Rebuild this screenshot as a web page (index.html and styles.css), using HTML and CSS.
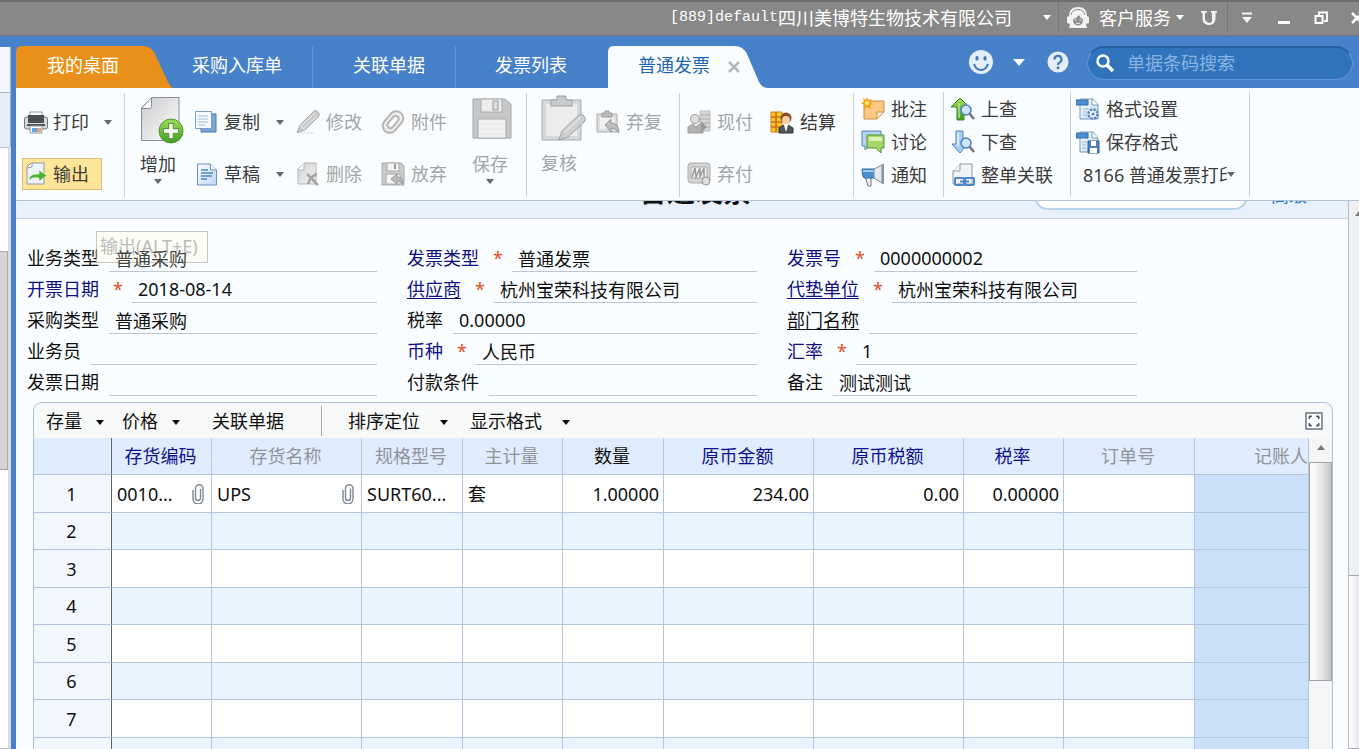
FILE: index.html
```html
<!DOCTYPE html>
<html lang="zh-CN">
<head>
<meta charset="utf-8">
<title>普通发票</title>
<link rel="stylesheet" href="styles.css">
</head>
<body>
<svg class="defs" aria-hidden="true">
  <defs>
    <linearGradient id="gPaper" x1="0" y1="0" x2="1" y2="1"><stop offset="0" stop-color="#c9cacc"/><stop offset="1" stop-color="#fff"/></linearGradient>
    <linearGradient id="gBlue" x1="0" y1="0" x2="1" y2="1"><stop offset="0" stop-color="#fff"/><stop offset="1" stop-color="#b9d7f3"/></linearGradient>
    <linearGradient id="gGreen" x1="0" y1="0" x2="0" y2="1"><stop offset="0" stop-color="#a3dc5c"/><stop offset="1" stop-color="#3f9d20"/></linearGradient>
    <linearGradient id="gGray" x1="0" y1="0" x2="1" y2="1"><stop offset="0" stop-color="#d2d2d2"/><stop offset="1" stop-color="#f2f2f2"/></linearGradient>
    <symbol id="clip" viewBox="0 0 12 20"><path d="M8.500 5v9a2.500 2.500 0 0 1-5 0V4.500a3.500 3.500 0 0 1 7.500 0V15a5 5 0 0 1-10 0V6" fill="none" stroke="#7e8691" stroke-width="1.400"/></symbol>
  </defs>
</svg>

<header class="titlebar">
  <button class="tb-item tb-company"><span class="tb-code">[889]default</span>四川美博特生物技术有限公司</button>
  <button class="tb-item tb-drop" aria-label="切换公司"><i class="caret"></i></button>
  <button class="tb-item tb-service">
    <svg width="24" height="24" viewBox="0 0 24 24"><path d="M3 10Q3 1 12 1t9 9l2 1v6l-3 1 1 4H3l1-4-3-1v-6z" fill="#f2f2f2"/><path d="M5 9Q6 3.500 12 3.500T19 9" fill="none" stroke="#8f8f8f"/><path d="M7 13q4-1 6-4 1 3 4 4 0 6-5 6.500Q7 19 7 13z" fill="#8a8a8a"/><path d="M8.500 14h2M13.500 14h2M10 17q2 1 4 0" stroke="#f4f4f4" fill="none"/></svg>
    客户服务<i class="caret"></i></button>
  <button class="tb-item tb-u" aria-label="U"><svg width="18" height="18" viewBox="0 0 18 18"><path d="M1 2h6v1.500L5 4v6a4 4 0 0 0 7 2.500V4l-1-.5V2h6v1.500l-1.500.5v5.500c0 4-3 6.500-6.500 6.500s-6.500-2.500-6.500-6V4L1 3.500z" fill="#f2f2f2"/></svg></button>
  <button class="tb-item tb-win" aria-label="更多"><svg width="12" height="12"><path d="M1 1.500h10" stroke="#f4f4f4" stroke-width="2"/><path d="M1 5h10l-5 6z" fill="#f4f4f4"/></svg></button>
  <button class="tb-item tb-win" aria-label="最小化"><svg width="14" height="14"><path d="M1 11.500h12" stroke="#fff" stroke-width="3"/></svg></button>
  <button class="tb-item tb-win" aria-label="还原"><svg width="14" height="14"><path d="M5 4V1.500h8V10h-3M1.500 5h7v7h-7z" fill="none" stroke="#fff" stroke-width="2"/></svg></button>
  <button class="tb-item tb-close" aria-label="关闭"><svg width="12" height="12"><path d="M1 1l10 10M11 1L1 11" stroke="#fff" stroke-width="2.500"/></svg></button>
</header>

<div class="shell">
  <aside class="rail"><div class="rail-head"></div><div class="rail-gap"></div><div class="rail-list"><div class="rail-thumb"></div></div></aside>
  <main class="work">
    <nav class="tabs">
      <a href="#" class="tab tab-home"><svg class="tab-shape" viewBox="0 0 158 42" preserveAspectRatio="none"><path d="M0 42V6Q0 0 6 0H127Q135 0 139 8L152 36Q155 42 158 42z" fill="#e9901a"/></svg>我的桌面</a>
      <a href="#" class="tab tab-in">采购入库单</a>
      <a href="#" class="tab tab-rel">关联单据</a>
      <a href="#" class="tab tab-list">发票列表</a>
      <a href="#" class="tab tab-active"><svg class="tab-shape" viewBox="0 0 160 42" preserveAspectRatio="none"><path d="M0 42V6Q0 0 6 0H127Q135 0 139 8L151 36Q154 42 160 42z" fill="#fafdff"/></svg>普通发票<svg class="tab-x" width="12" height="12"><path d="M1 1l10 10M11 1L1 11" stroke="#b5b5b5" stroke-width="2.500"/></svg></a>
      <div class="tab-tools">
        <button class="plain" aria-label="表情"><svg width="26" height="26" viewBox="0 0 26 26"><circle cx="13" cy="12" r="12" fill="#e4eefa"/><path d="M9 7.500v1.500M17 7.500v1.500" stroke="#3f74b3" stroke-width="3" stroke-linecap="round"/><path d="M6 14q2 6 7 6t7-6" fill="none" stroke="#3f74b3" stroke-width="2"/></svg></button>
        <button class="plain tool-drop" aria-label="更多"><i class="caret caret-lg"></i></button>
        <button class="plain tool-help" aria-label="帮助"><svg width="22" height="24" viewBox="0 0 22 24"><circle cx="11" cy="11" r="10.500" fill="#e4eefa"/><path d="M7.500 8.500a3.500 3.500 0 1 1 5 3c-1.200.6-1.500 1.200-1.500 2.500" fill="none" stroke="#4a7ab3" stroke-width="2.300"/><circle cx="11" cy="16.800" r="1.500" fill="#4a7ab3"/></svg></button>
        <label class="search"><svg width="20" height="20" viewBox="0 0 20 20"><circle cx="8" cy="8" r="5.500" fill="none" stroke="#fff" stroke-width="2.500"/><path d="M12 12l6 6" stroke="#fff" stroke-width="3.500"/></svg><input type="search" placeholder="单据条码搜索" aria-label="单据条码搜索"></label>
      </div>
    </nav>

    <div class="ribbon">
      <section class="group g-out rows2">
        <button class="cmd"><svg class="ic" viewBox="0 0 24 24"><path d="M6 2h12v6H6z" fill="#fff" stroke="#9a9a9a"/><rect x=".5" y="7" width="23" height="12" rx="2" fill="#d6dadf" stroke="#777"/><rect x="4" y="5" width="16" height="8" fill="#4a4d52"/><path d="M3 15h18" stroke="#555" stroke-width="2"/><path d="M6 16h12v7H6z" fill="#fff" stroke="#899"/><path d="M8 18h5v4H8z" fill="#5aa7e2"/><path d="M13 18h4v4h-4z" fill="#e0a274"/></svg>打印<i class="caret"></i></button>
        <button class="cmd cmd-hot"><svg class="ic" viewBox="0 0 24 24"><path d="M7 1h13v21H3V5z" fill="#eef3fa" stroke="#8a97aa"/><path d="M3 6l5-1V1" fill="#fff" stroke="#8a97aa"/><path d="M5 19c0-7 5-7 10-7V8l8 5.500-8 6V16c-5-1-8 0-10 3z" fill="#4cb530" stroke="#fff" stroke-width=".6"/></svg>输出</button>
      </section>

      <section class="group g-edit">
        <button class="big big-add"><svg width="44" height="48" viewBox="0 0 44 48"><path d="M12 1.500h27v43H1.500V12z" fill="url(#gPaper)" stroke="#8b8e94"/><path d="M1.500 12.500h8q2 0 2-2V1.500z" fill="#fff" stroke="#8b8e94"/><circle cx="31" cy="35" r="12" fill="url(#gGreen)" stroke="#4c9a2c"/><path d="M31 27v16M23 35h16" stroke="#5c9c3c" stroke-width="6"/><path d="M31 28v14M24 35h14" stroke="#fff" stroke-width="3.500"/></svg>增加<i class="caret"></i></button>
        <div class="rows2 c-copy">
          <button class="cmd"><svg class="ic" viewBox="0 0 24 24"><path d="M7 4h15v18H7z" fill="#78a7d8" stroke="#4678ad"/><path d="M1.500 1.500h16v17h-16z" fill="#f4f9ff" stroke="#7d9cc0"/><path d="M4 6h10M4 9h10M4 12h10M4 15h7" stroke="#a2bddb"/></svg>复制<i class="caret"></i></button>
          <button class="cmd"><svg class="ic" viewBox="0 0 24 24"><path d="M3.500 2h13l6 6v15h-19z" fill="url(#gBlue)" stroke="#6b8fbb"/><path d="M16.500 2v6h6" fill="#fff" stroke="#6b8fbb"/><path d="M7 8h7M7 11h12M7 14h11M7 17h6" stroke="#4e85c2" stroke-width="1.500"/></svg>草稿<i class="caret"></i></button>
        </div>
        <div class="rows2 c-mod">
          <button class="cmd off" disabled><svg class="ic" viewBox="0 0 24 24"><path d="M1 23l3-8L18 1q2-1 4 1t1 4L9 20z" fill="#ccc" stroke="#a9a9a9"/><path d="M5 16L19 3M7 19L21 6M4 15l5 5" stroke="#e9e9e9" fill="none"/><path d="M5 23h13" stroke="#ddd"/></svg>修改</button>
          <button class="cmd off" disabled><svg class="ic" viewBox="0 0 24 24"><path d="M8 1h12v21H2V7z" fill="url(#gGray)" stroke="#b5b5b5"/><path d="M2 8h6V1" fill="#fff" stroke="#b5b5b5"/><path d="M11 12l11 11M21 12c-5 2-8 6-9 10" stroke="#a5a5a5" stroke-width="2.500" fill="none"/></svg>删除</button>
        </div>
        <div class="rows2 c-att">
          <button class="cmd off" disabled><svg class="ic" viewBox="0 0 24 24"><g transform="rotate(40 12 12)"><rect x="5" y="0" width="14" height="24" rx="7" fill="#eee" stroke="#b5b5b5" stroke-width="2"/><path d="M9 16V8a3 3 0 0 1 6 0v8a3 3 0 0 1-6 0" fill="#fff" stroke="#b5b5b5" stroke-width="2"/></g></svg>附件</button>
          <button class="cmd off" disabled><svg class="ic" viewBox="0 0 24 24"><path d="M1 1h19l3 3v19H1z" fill="#c9c9c9" stroke="#aaa"/><path d="M6 1h12v8H6zM5 12h14v10H5z" fill="#f3f3f3" stroke="#aaa"/><path d="M14 2v5" stroke="#999" stroke-width="2"/><path d="M10 17l6-5v3q6 0 6 7-2-3-6-3v3z" fill="#bbb" stroke="#999"/></svg>放弃</button>
        </div>
        <button class="big big-save off" disabled><svg width="40" height="42" viewBox="0 0 40 42"><path d="M1 1h32l6 5v34H1z" fill="#c6c7c9" stroke="#a6a7a9"/><path d="M9 1h21v13H9z" fill="#ececec" stroke="#aaa"/><path d="M21 3h5v9h-5z" fill="#ddd" stroke="#999"/><path d="M6 21h28v19H6z" fill="#f1f1f1" stroke="#aaa"/><path d="M9 26h22M9 31h22M9 36h22" stroke="#e6e6e6"/></svg>保存<i class="caret"></i></button>
      </section>

      <section class="group g-audit">
        <button class="big big-audit off" disabled><svg width="46" height="48" viewBox="0 0 46 48"><path d="M1 5h39v40H1z" fill="#d6d7d8" stroke="#a8a9aa"/><path d="M5 9h31v32H5z" fill="#ececec"/><path d="M10 11V5h6V1h9v4h6v6z" fill="#c9cacb" stroke="#9c9d9e"/><path d="M18 45l3-9 17-16q3-1 5 1t1 5L27 42z" fill="#d0d0d0" stroke="#a0a0a0"/><path d="M24 37l16-15" stroke="#f4f4f4"/></svg>复核</button>
        <div class="rows2"><button class="cmd off" disabled><svg class="ic" viewBox="0 0 24 24"><path d="M1 4h20v18H1z" fill="#dedede" stroke="#aaa"/><path d="M4 7h14v12H4z" fill="#f1f1f1"/><path d="M6 7V3h3V1h4v2h3v4z" fill="#bbb" stroke="#999"/><path d="M9 15l6-6v4q8 0 8 10-3-5-8-5v4z" fill="#bdbdbd" stroke="#999"/></svg>弃复</button></div>
      </section>

      <section class="group g-pay">
        <div class="rows2 c-pay">
          <button class="cmd off" disabled><svg class="ic" viewBox="0 0 24 24"><path d="M13 1h10v20H13z" fill="#d5d5d5" stroke="#bbb"/><path d="M13 5h10M13 9h10M13 13h10M13 17h10" stroke="#aaa"/><circle cx="8" cy="9" r="4.500" fill="#ddd" stroke="#999"/><path d="M1 23v-6l5-3 3 3 3-3 4 3v6z" fill="#b2b2b2" stroke="#999"/><path d="M14 11l6 6-6 5z" fill="#999"/></svg>现付</button>
          <button class="cmd off" disabled><svg class="ic" viewBox="0 0 24 24"><rect x="1" y="1" width="22" height="20" rx="3" fill="#d4d4d4" stroke="#a9a9a9"/><path d="M4 5h16v11H4z" fill="#eee" stroke="#aaa"/><path d="M5 15l3-9 1 9 4-9v9l4-9v9" fill="none" stroke="#999" stroke-width="1.500"/><circle cx="19" cy="19" r="4" fill="#ddd" stroke="#999"/></svg>弃付</button>
        </div>
        <div class="rows2"><button class="cmd"><svg class="ic" viewBox="0 0 24 24"><path d="M1 2h11v20H1z" fill="#f9cc2c" stroke="#d2771b"/><path d="M1 7h11M1 12h11M1 17h11M6 2v20" stroke="#cf6a18" stroke-width="1.600"/><circle cx="16" cy="8" r="5.500" fill="#8c4c24"/><circle cx="16" cy="10" r="4" fill="#f6cfa3"/><path d="M9 23v-5l5-3 2 2 2-2 5 3v5z" fill="#4e565f" stroke="#333"/><path d="M14 15h4l-2 7z" fill="#fff"/></svg>结算</button></div>
      </section>

      <section class="group g-note rows3">
        <button class="cmd"><svg class="ic" viewBox="0 0 24 24"><path d="M3 4h20v11l-7 7H3z" fill="#fbc982" stroke="#c98d3c"/><path d="M23 15h-7v7z" fill="#fff2dc" stroke="#c98d3c"/><path d="M6 0l1.500 3L11 2 9 5l3 2-3 1 1 4-4-2-3 2V8L0 6l3-1-1-4 3 2z" fill="#f7a114"/><circle cx="6" cy="6" r="2.300" fill="#ffe774"/></svg>批注</button>
        <button class="cmd"><svg class="ic" viewBox="0 0 24 24"><path d="M1 1h19v15H7l-3 4v-4H1z" fill="#b7d3f1" stroke="#5280b5"/><path d="M6 5h17v13h-3v5l-5-5H6z" fill="#a4d768" stroke="#4f9231"/><path d="M8 7h13v4H8z" fill="#d9f1b7"/></svg>讨论</button>
        <button class="cmd"><svg class="ic" viewBox="0 0 24 24"><path d="M4 13h6v10H7z" fill="#eee" stroke="#777"/><path d="M1 6h14v9H3q-2-2-2-9z" fill="#4a8fd2" stroke="#326ca8"/><path d="M2 8h13" stroke="#a4cdf0" stroke-width="2"/><path d="M13 6l8-4v18l-8-5z" fill="#e5e8ec" stroke="#7d8894"/><path d="M22 1v20" stroke="#8b95a0" stroke-width="2"/></svg>通知</button>
      </section>

      <section class="group g-find rows3">
        <button class="cmd"><svg class="ic" viewBox="0 0 24 24"><path d="M9 1l9 9h-5v13H6V10H0z" fill="url(#gGreen)" stroke="#3b8c20"/><path d="M8 6v15" stroke="#d5f5b4"/><path d="M18 16l5 6" stroke="#6d747c" stroke-width="2.500"/><circle cx="15" cy="13" r="5" fill="#cfe5fb" stroke="#4a80b8" stroke-width="1.500"/></svg>上查</button>
        <button class="cmd"><svg class="ic" viewBox="0 0 24 24"><path d="M5 1h7v13h5l-8 9-8-9h4z" fill="#a9cff4" stroke="#4a80b8"/><path d="M7 2v14" stroke="#e9f4ff" stroke-width="1.500"/><path d="M18 16l5 6" stroke="#6d747c" stroke-width="2.500"/><circle cx="15" cy="13" r="5" fill="#cfe5fb" stroke="#4a80b8" stroke-width="1.500"/></svg>下查</button>
        <button class="cmd"><svg class="ic" viewBox="0 0 24 24"><path d="M9 1h12v20H2V8z" fill="#f1f3f6" stroke="#8c97a6"/><path d="M2 8h7V1" fill="#fff" stroke="#8c97a6"/><g fill="none" stroke="#4d87c5" stroke-width="2"><rect x="4" y="15" width="9" height="7" rx="1"/><rect x="14" y="15" width="9" height="7" rx="1"/><path d="M9 18.500h9"/></g></svg>整单关联</button>
      </section>

      <section class="group g-form rows3">
        <button class="cmd"><svg class="ic" viewBox="0 0 24 24"><path d="M4 2h13l5 6v14H4z" fill="url(#gBlue)" stroke="#7d96b5"/><path d="M16 2v6h6" fill="#fff" stroke="#7d96b5"/><path d="M0 3h12v5H0z" fill="#4a8fd2" stroke="#34699f"/><path d="M7 12h6M7 15h4M7 18h4" stroke="#9bb7d6"/><circle cx="17" cy="17" r="4.500" fill="#fff" stroke="#5589c3" stroke-width="2.500" stroke-dasharray="2.500 1"/><circle cx="17" cy="17" r="1.500" fill="#4a7db5"/></svg>格式设置</button>
        <button class="cmd"><svg class="ic" viewBox="0 0 24 24"><path d="M4 2h13l5 6v14H4z" fill="url(#gBlue)" stroke="#7d96b5"/><path d="M16 2v6h6" fill="#fff" stroke="#7d96b5"/><path d="M0 3h12v5H0z" fill="#4a8fd2" stroke="#34699f"/><path d="M6 12h5M6 15h4M6 18h4" stroke="#9bb7d6"/><path d="M12 11h11v12H12z" fill="#4f83ba" stroke="#2f5f94"/><path d="M15 11h5v5h-5zM14 18h7v5h-7z" fill="#fff"/></svg>保存格式</button>
        <div class="tpl"><select aria-label="打印模板"><option>8166 普通发票打印模版</option></select><i class="caret"></i></div>
      </section>
    </div>

    <div class="doc">
      <div class="page">
        <div class="strip"><h1 class="doc-title">普通发票</h1><input class="strip-search" aria-label="查找"><a href="#" class="strip-link">高级</a></div>
        <form class="fields">
          <div class="tip" role="tooltip">输出(ALT+E)</div>
          <div class="field"><label for="f1">业务类型</label><input id="f1" value="普通采购"></div>
          <div class="field"><label for="f2" class="req">发票类型</label><b>*</b><input id="f2" value="普通发票"></div>
          <div class="field"><label for="f3" class="req">发票号</label><b>*</b><input id="f3" value="0000000002"></div>
          <div class="field"><label for="f4" class="req">开票日期</label><b>*</b><input id="f4" value="2018-08-14"></div>
          <div class="field"><label for="f5" class="req lk">供应商</label><b>*</b><input id="f5" value="杭州宝荣科技有限公司"></div>
          <div class="field"><label for="f6" class="req lk">代垫单位</label><b>*</b><input id="f6" value="杭州宝荣科技有限公司"></div>
          <div class="field"><label for="f7">采购类型</label><input id="f7" value="普通采购"></div>
          <div class="field"><label for="f8">税率</label><input id="f8" value="0.00000"></div>
          <div class="field"><label for="f9" class="lk">部门名称</label><input id="f9"></div>
          <div class="field"><label for="f10">业务员</label><input id="f10"></div>
          <div class="field"><label for="f11" class="req">币种</label><b>*</b><input id="f11" value="人民币"></div>
          <div class="field"><label for="f12" class="req">汇率</label><b>*</b><input id="f12" value="1"></div>
          <div class="field"><label for="f13">发票日期</label><input id="f13"></div>
          <div class="field"><label for="f14">付款条件</label><input id="f14"></div>
          <div class="field"><label for="f15">备注</label><input id="f15" value="测试测试"></div>
        </form>

        <section class="panel">
          <div class="bar">
            <button>存量<i class="caret"></i></button>
            <button>价格<i class="caret"></i></button>
            <button class="bar-rel">关联单据</button>
            <span class="bar-sep"></span>
            <button class="bar-wide">排序定位<i class="caret"></i></button>
            <button class="bar-wide">显示格式<i class="caret"></i></button>
            <button class="bar-full" aria-label="全屏"><svg width="18" height="18" viewBox="0 0 18 18"><path d="M1 1h16v16H1z" fill="#fff" stroke="#6b7280" stroke-width="1.500"/><path d="M4 7V4h3zM11 4h3v3zM14 11v3h-3zM7 14H4v-3z" fill="#5b6270" stroke="#5b6270"/></svg></button>
          </div>
          <div class="gridwrap">
            <table class="grid">
              <colgroup><col class="w78"><col class="w100"><col class="w150"><col class="w101"><col class="w100"><col class="w101"><col class="w150"><col class="w150"><col class="w100"><col class="w131"><col></colgroup>
              <thead><tr><th></th><th class="must">存货编码</th><th>存货名称</th><th>规格型号</th><th>主计量</th><th class="on">数量</th><th class="must">原币金额</th><th class="must">原币税额</th><th class="must">税率</th><th>订单号</th><th class="last">记账人</th></tr></thead>
              <tbody>
                <tr><th>1</th><td><div class="att">0010...<svg width="12" height="20"><use href="#clip"/></svg></div></td><td><div class="att">UPS<svg width="12" height="20"><use href="#clip"/></svg></div></td><td>SURT60...</td><td>套</td><td class="num">1.00000</td><td class="num">234.00</td><td class="num">0.00</td><td class="num">0.00000</td><td></td><td></td></tr>
                <tr><th>2</th><td></td><td></td><td></td><td></td><td></td><td></td><td></td><td></td><td></td><td></td></tr>
                <tr><th>3</th><td></td><td></td><td></td><td></td><td></td><td></td><td></td><td></td><td></td><td></td></tr>
                <tr><th>4</th><td></td><td></td><td></td><td></td><td></td><td></td><td></td><td></td><td></td><td></td></tr>
                <tr><th>5</th><td></td><td></td><td></td><td></td><td></td><td></td><td></td><td></td><td></td><td></td></tr>
                <tr><th>6</th><td></td><td></td><td></td><td></td><td></td><td></td><td></td><td></td><td></td><td></td></tr>
                <tr><th>7</th><td></td><td></td><td></td><td></td><td></td><td></td><td></td><td></td><td></td><td></td></tr>
                <tr><th></th><td></td><td></td><td></td><td></td><td></td><td></td><td></td><td></td><td></td><td></td></tr>
              </tbody>
            </table>
            <div class="vbar"><div class="vbar-up"><i class="caret caret-up"></i></div><div class="vbar-thumb"></div></div>
          </div>
        </section>
      </div>
      <div class="pagebar"><div class="pagebar-up"><i class="caret caret-up"></i></div><div class="pagebar-thumb"></div></div>
    </div>
  </main>
</div>
</body>
</html>
```
FILE: styles.css
```css
* { box-sizing: border-box; }
html, body { height: 100%; margin: 0; }
body {
  display: flex;
  flex-direction: column;
  overflow: hidden;
  font-family: "Noto Sans", "Noto Sans CJK SC", sans-serif;
  font-size: 18px;
  line-height: 24px;
  color: #111;
  background: #fafdff;
}
button, input, select { font: inherit; color: inherit; margin: 0; }
button { padding: 0; border: 0; background: none; white-space: nowrap; }
a { color: inherit; text-decoration: none; }
svg { flex: none; display: block; }
.defs { position: absolute; width: 0; height: 0; }

.caret { display: block; flex: none; border: 4px solid transparent; border-top: 5px solid currentColor; border-bottom: 0; }
.caret-lg { border-width: 6px; border-top-width: 7px; border-bottom-width: 0; }
.caret-up { border-top: 0; border-bottom: 5px solid #777; }

/* Title bar */
.titlebar {
  flex: none;
  display: flex;
  justify-content: flex-end;
  height: 36px;
  overflow: hidden;
  padding-bottom: 2px;
  color: #fff;
  background: #888;
  border-top: 2px solid #6d6d6d;
  border-bottom: 1px solid #6f7680;
}
.tb-item { display: flex; align-items: center; justify-content: center; flex: none; }
.tb-company { padding-right: 17px; }
.tb-code { font-family: "Liberation Mono", monospace; font-size: 15px; }
.tb-drop { width: 30px; padding-left: 6px; border-right: 1px solid #757575; }
.tb-service { width: 132px; gap: 5px; }
.tb-service svg { margin-right: 4px; }
.tb-u { width: 37px; border-right: 1px solid #757575; }
.tb-win { width: 37px; }
.tb-close { width: 20px; padding-left: 12px; justify-content: flex-start; }

.shell { flex: 1; display: flex; min-height: 0; background: #4781c9; }

/* Left navigation edge */
.rail { flex: none; width: 16px; padding: 11px 5px 0 0; display: flex; flex-direction: column; }
.rail-head { height: 46px; background: #f1f7fc; border-right: 1px solid #9bb5d4; border-bottom: 1px solid #a9bdd6; }
.rail-gap { height: 54px; background: #e4eef9; border-right: 1px solid #9bb5d4; }
.rail-list { flex: 1; background: #fdfdfb; border: 1px solid #b9c2cd; border-left: 0; border-right: 3px solid #dcdcdc; padding-top: 103px; }
.rail-thumb { height: 219px; background: #d3d3d8; border: 1px solid #aaa; border-left: 0; }

.work { flex: 1; min-width: 0; display: flex; flex-direction: column; }

/* Tabs */
.tabs { flex: none; display: flex; height: 52px; padding-top: 10px; color: #fff; }
.tab { position: relative; z-index: 0; flex: none; display: flex; padding-top: 7px; white-space: nowrap; }
.tab-shape { position: absolute; inset: 0; width: 100%; height: 100%; z-index: -1; }
.tab-home { width: 158px; padding-left: 31px; }
.tab-in { width: 139px; padding-left: 18px; border-right: 1px solid #6296d4; }
.tab-rel { width: 143px; padding-left: 40px; border-right: 1px solid #6296d4; }
.tab-list { width: 152px; padding-left: 39px; }
.tab-active { width: 160px; padding-left: 30px; color: #1f66b3; }
.tab-x { margin: 8px 0 0 18px; }
.tab-tools { margin-left: auto; display: flex; align-items: center; height: 33px; padding-right: 6px; }
.tool-drop { margin: 0 22px 0 19px; }
.search {
  display: flex; align-items: center; gap: 12px;
  width: 266px; height: 34px; margin-left: 18px; padding: 0 7px;
  border-radius: 17px; background: #3075bc;
  border: 1px solid #5d97d8; border-top: 2px solid #2660a0;
}
.search input { flex: 1; min-width: 0; padding: 0; border: 0; outline: 0; background: none; }
.search input::placeholder { color: #87b3e2; opacity: 1; }

/* Ribbon */
.ribbon { flex: none; display: flex; height: 113px; padding: 0 0 3px; color: #3c3c3c; background: #fafdff; border-bottom: 1px solid #b3c2d0; }
.group { flex: none; display: flex; margin-top: 5px; border-right: 1px solid #ccd1d6; }
.rows2 { display: flex; flex-direction: column; align-items: flex-start; gap: 20px; padding-top: 13px; }
.rows3 { flex-direction: column; align-items: flex-start; margin-top: 4px; }
.cmd { display: flex; align-items: center; gap: 6px; height: 32px; }
.rows3 .cmd { height: 33px; }
.ic { width: 24px; height: 24px; }
.ribbon .caret { color: #666; }
.cmd .caret { margin-left: 10px; }
.off { color: #a2a5a8; }
.big { display: flex; flex-direction: column; align-items: flex-start; align-self: flex-start; }
.big svg { margin-bottom: 8px; }
.big .caret { margin: 3px 0 0 14px; }
.g-out { width: 109px; padding-left: 6px; }
.g-out .cmd { gap: 5px; border: 1px solid transparent; padding: 0 1px; width: 98px; }
.g-out .cmd-hot { width: 80px; background: #ffe597; border-color: #d9bb72; }
.g-edit { width: 402px; padding-left: 15px; }
.big-add { width: 44px; padding-top: 3px; }
.c-copy { margin-left: 10px; width: 102px; }
.c-mod { width: 85px; }
.c-att { width: 91px; }
.big-save { padding-top: 5px; width: 50px; }
.big-save svg { margin-bottom: 12px; }
.g-audit { width: 153px; padding-left: 14px; }
.big-audit { width: 55px; padding-top: 2px; }
.g-pay { width: 174px; padding-left: 7px; }
.c-pay { width: 83px; }
.g-note { width: 90px; padding-left: 7px; }
.g-find { width: 127px; padding-left: 7px; }
.g-form { width: 179px; padding-left: 5px; }
.tpl { display: flex; align-items: center; height: 33px; padding-left: 7px; }
.tpl select { width: 144px; height: 28px; padding: 0; border: 0; background: none; appearance: none; overflow: hidden; text-overflow: clip; }

/* Document */
.doc { flex: 1; min-height: 0; display: flex; background: #fafdff; }
.page { flex: 1; min-width: 0; display: flex; flex-direction: column; }
.strip {
  flex: none; position: relative; height: 18px; overflow: hidden;
  display: flex; align-items: flex-end; justify-content: center;
  background: #e8f0fc; border-bottom: 1px solid #c9d1de;
}
.doc-title { margin: 0 0 8px 26px; font-size: 28px; line-height: 38px; font-weight: 700; }
.strip-search { position: absolute; right: 100px; bottom: 8px; width: 214px; height: 28px; border: 2px solid #b9d3e8; border-radius: 14px; background: #fff; }
.strip-link { position: absolute; right: 41px; bottom: 11px; color: #2474bd; }
.fields {
  flex: none; position: relative;
  display: grid; grid-template-columns: repeat(3, minmax(0, 1fr)); grid-auto-rows: 31px; column-gap: 30px;
  padding: 22px 211px 6px 11px;
}
.field { display: flex; align-items: center; min-width: 0; }
.field label { flex: none; padding-top: 2px; }
.field b { width: 9px; padding-top: 2px; margin: 0 0 0 14px; color: #e2501e; font-weight: 400; text-align: center; }
.field input { flex: 1; min-width: 0; height: 31px; margin-left: 10px; padding: 4px 0 0 6px; border: 0; border-bottom: 1px solid #bfc6d0; background: none; border-radius: 0; outline: 0; }
.req { color: #10107f; }
.lk { text-decoration: underline; text-underline-offset: 2px; }
.tip { position: absolute; left: 80px; top: 12px; z-index: 2; width: 112px; height: 32px; padding: 0 3px; white-space: nowrap; border: 1px solid #a5a39c; background: #fffdf0; color: #909090; opacity: .6; line-height: 28px; }
.field:nth-child(2) input { position: relative; z-index: 3; color: #444; }

/* Detail grid */
.panel { flex: 1; min-height: 0; margin: 0 15px 0 17px; display: flex; flex-direction: column; overflow: hidden; border: 1px solid #a9c1da; border-bottom: 0; border-radius: 9px 9px 0 0; background: #f7f8f8; }
.bar { flex: none; display: flex; align-items: center; height: 35px; padding: 0 9px 0 12px; }
.bar button { display: flex; align-items: center; gap: 14px; margin-right: 18px; }
.bar .caret { margin-top: 4px; }
.bar .bar-rel { margin: 0 37px 0 14px; }
.bar .bar-wide { gap: 20px; margin-right: 22px; }
.bar-sep { width: 1px; height: 30px; margin-right: 26px; background: #a9a9a9; }
.bar .bar-full { margin: 0 0 0 auto; }
.gridwrap { flex: 1; min-height: 0; display: flex; }
.grid { flex: 1; width: 0; align-self: flex-start; table-layout: fixed; border-collapse: separate; border-spacing: 0; white-space: nowrap; }
.w78 { width: 78px; } .w100 { width: 100px; } .w101 { width: 101px; } .w131 { width: 131px; } .w150 { width: 150px; }
.grid th, .grid td { height: 38px; padding: 0 4px 0 5px; overflow: hidden; font-weight: 400; border-right: 1px solid #b5c5e0; border-bottom: 1px solid #b5c5e0; text-align: left; }
.grid thead th { height: 37px; padding: 0 5px 0 3px; color: #909398; text-align: center; background: #dfecfd; }
.grid thead .must { color: #10108c; }
.grid thead .on { color: #111; }
.grid thead .last { text-align: right; padding-right: 0; }
.grid tbody td { background: #fff; }
.grid tbody tr:nth-child(even) td { height: 37px; background: #e8f4fe; }
.grid tbody tr:nth-child(even) th { height: 37px; }
.grid tbody tr td:last-child { background: #cae0f7; }
.grid tbody th { padding: 0 5px 0 3px; text-align: center; background: #f2f7fd; }
.grid tr th:first-child { border-right-color: #666; }
.grid .num { text-align: right; }
.att { display: flex; justify-content: space-between; align-items: center; padding-right: 3px; }
.vbar { flex: none; width: 23px; background: #f4f5f7; }
.vbar-up { height: 24px; display: flex; align-items: center; justify-content: center; padding-bottom: 5px; }
.vbar-thumb { height: 219px; border: 1px solid #a3a3a8; background: linear-gradient(90deg, #fafafa 20%, #e4e4e6 60%, #c4c4c8); }

.pagebar { flex: none; width: 11px; overflow: hidden; background: #eef0f3; border-left: 1px solid #b9bcc4; display: flex; flex-direction: column; }
.pagebar-up { flex: none; height: 374px; padding: 10px 0 0 6px; }
.pagebar-thumb { flex: 1; margin-right: -6px; border: 1px solid #a3a3a8; border-left: 0; background: linear-gradient(90deg, #fff, #dcdce0); }
```
